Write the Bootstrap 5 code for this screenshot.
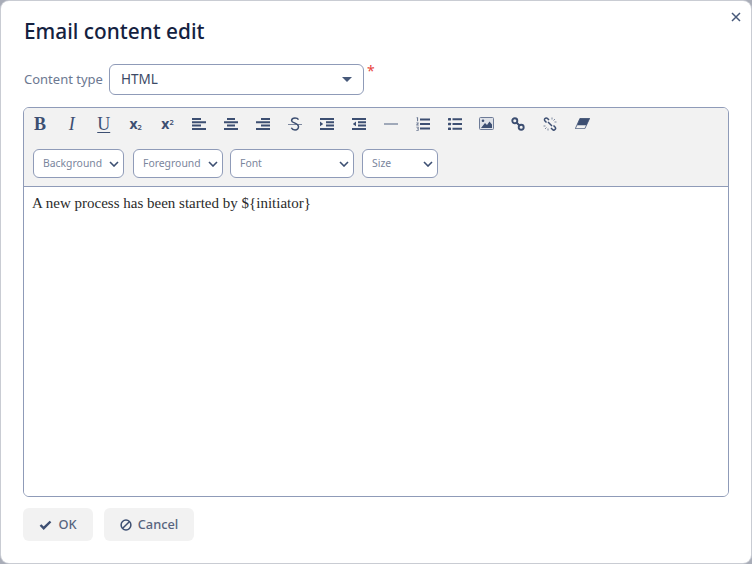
<!DOCTYPE html>
<html lang="en">
<head>
<meta charset="utf-8">
<title>Email content edit</title>
<link href="https://cdn.jsdelivr.net/npm/bootstrap@5.3.0/dist/css/bootstrap.min.css" rel="stylesheet">
<style>
html,body{height:100%;}
body{background:#a9adb8;font-family:"Noto Sans","Open Sans",sans-serif;overflow:hidden;}
.dlg{position:relative;width:750px;height:562px;margin:1px 0 0 1px;background:#fff;border-radius:8px;padding:0 22px;display:flex;flex-direction:column;box-shadow:0 0 0 1px #c9ccd3;}
.dlg-title{font-size:20.800px;font-weight:500;color:#14213f;line-height:28px;margin:16px 0 0 1px;}
.dlg-close{position:absolute;top:10px;right:9px;width:12px;height:12px;border:0;background:none;padding:0;line-height:0;color:#47597a;}
.type-row{margin:19px 0 0 1px;height:31px;}
.type-label{font-size:13px;color:#6c7891;width:85px;flex:none;}
.type-select{width:255px;height:31px;border:1px solid #8f9bb8;border-radius:6px;font-size:13.500px;color:#3c4a66;padding:0 11px;background:#fff;}
.req{color:#e8453c;font-size:14px;line-height:14px;margin:0 0 0 3px;align-self:flex-start;}
.tri{width:0;height:0;border-left:5px solid transparent;border-right:5px solid transparent;border-top:5px solid #47597a;}
.editor{margin-top:12px;height:390px;width:706px;border:1px solid #8f9bb8;border-radius:6px;overflow:hidden;display:flex;flex-direction:column;}
.tools{background:#f2f2f2;border-bottom:1px solid #8f9bb8;height:79px;flex:none;}
.tool-row{height:31px;}
.tool{width:31.900px;height:31px;display:flex;align-items:center;justify-content:center;color:#3d4f72;flex:none;font-family:"Liberation Serif",serif;font-size:18px;line-height:1;}
.tool svg{display:block;}
.tool b{font-weight:700;}
.tool u{text-underline-offset:2px;}
.tool .sc{font-family:"Noto Sans",sans-serif;font-size:14px;font-weight:700;}
.tool .sc sub,.tool .sc sup{font-size:7.500px;font-weight:600;}
.sel-row{margin:10px 0 0 9px;gap:9px;}
.mini{height:29px;border:1px solid #8f9bb8;border-radius:6px;background:#fff;font-size:10.400px;color:#7a859c;padding:0 4px 0 9px;}
.w1{width:91px}.w2{width:90px;margin-right:-2px}.w3{width:124px;margin-right:-1px}.w4{width:76px}
.doc{flex:1;background:#fff;padding:7px 8px;font-family:"Liberation Serif",serif;font-size:15px;line-height:18px;color:#2b2b2b;}
.acts{margin-top:11px;gap:11px;}
.act{height:33px;background:#f2f2f2;border:0;border-radius:6px;font-size:12.800px;font-weight:500;color:#57647e;padding:0;display:flex;align-items:center;justify-content:center;gap:6px;}
.act-ok{width:70px}.act-cancel{width:90px}
</style>
</head>
<body>
<div class="dlg">
  <h5 class="dlg-title">Email content edit</h5>
  <button class="dlg-close" type="button" aria-label="Close">
    <svg width="12" height="12" viewBox="0 0 12 12"><path d="M2 2l8 8M10 2l-8 8" stroke="currentColor" stroke-width="1.500" fill="none"/></svg>
  </button>
  <div class="type-row d-flex align-items-center">
    <span class="type-label">Content type</span>
    <div class="type-select d-flex align-items-center justify-content-between"><span>HTML</span><span class="tri"></span></div>
    <span class="req">*</span>
  </div>
  <div class="editor">
    <div class="tools">
      <div class="tool-row d-flex">
        <span class="tool"><b>B</b></span>
        <span class="tool"><i>I</i></span>
        <span class="tool"><u>U</u></span>
        <span class="tool"><span class="sc">x<sub>2</sub></span></span>
        <span class="tool"><span class="sc">x<sup>2</sup></span></span>
        <span class="tool"><svg width="14" height="12" viewBox="0 0 14 12" fill="currentColor"><path d="M0 0h9v2H0zM0 3.300h14v2H0zM0 6.600h9v2H0zM0 9.900h14v2H0z"/></svg></span>
        <span class="tool"><svg width="14" height="12" viewBox="0 0 14 12" fill="currentColor"><path d="M3 0h8v2H3zM0 3.300h14v2H0zM3 6.600h8v2H3zM0 9.900h14v2H0z"/></svg></span>
        <span class="tool"><svg width="14" height="12" viewBox="0 0 14 12" fill="currentColor"><path d="M5 0h9v2H5zM0 3.300h14v2H0zM5 6.600h9v2H5zM0 9.900h14v2H0z"/></svg></span>
        <span class="tool"><svg width="14" height="14" viewBox="0 0 14 14"><path d="M0 7.500h14" stroke="#7d889f" stroke-width="1"/><path d="M10.500 2.600C9.800 1.400 8.400 1 7 1 5 1 3.600 2 3.600 3.700 3.600 6 10.500 6 10.500 9.600 10.500 11.600 9 13 7 13 5.200 13 4 12.300 3.300 10.800" fill="none" stroke="currentColor" stroke-width="1.500"/></svg></span>
        <span class="tool"><svg width="14" height="12" viewBox="0 0 14 12" fill="currentColor"><path d="M0 0h14v2H0zM6 3.300h8v2H6zM6 6.600h8v2H6zM0 9.900h14v2H0zM0 3.500l3.200 2.400L0 8.300z"/></svg></span>
        <span class="tool"><svg width="14" height="12" viewBox="0 0 14 12" fill="currentColor"><path d="M0 0h14v2H0zM6 3.300h8v2H6zM6 6.600h8v2H6zM0 9.900h14v2H0zM4 3.500L.8 5.900 4 8.300z"/></svg></span>
        <span class="tool"><svg width="14" height="4" viewBox="0 0 14 4"><path d="M0 2h14" stroke="#8590a6" stroke-width="1.300"/></svg></span>
        <span class="tool"><svg width="14" height="14" viewBox="0 0 14 14" fill="currentColor"><path d="M4 1.500h10v2H4zM4 6h10v2H4zM4 10.500h10v2H4z"/><path d="M.6.300h1.500v4H1V1.300H.6zM.3 5.500h2.400v.9L1.400 7.600h1.300v.8H.3v-.8L1.600 6.300H.3zM.3 9.800h2.400v3.900H.3v-.8h1.400v-.8H1v-.7h.7v-.8H.3z" opacity=".75"/></svg></span>
        <span class="tool"><svg width="14" height="12" viewBox="0 0 14 12" fill="currentColor"><rect x="0" y="0" width="3" height="2.600" rx=".6"/><rect x="0" y="4.700" width="3" height="2.600" rx=".6"/><rect x="0" y="9.400" width="3" height="2.600" rx=".6"/><path d="M4.500.3H14v2H4.500zM4.500 5H14v2H4.500zM4.500 9.700H14v2H4.500z"/></svg></span>
        <span class="tool"><svg width="15" height="13" viewBox="0 0 15 13"><rect x=".5" y=".5" width="14" height="12" rx="1" fill="#dfe2e8" stroke="#6d7b97"/><path d="M2 11l4-5 2 2L10.500 4.500 13 7.500V11z" fill="currentColor"/><circle cx="4" cy="3.800" r="1.300" fill="currentColor"/></svg></span>
        <span class="tool"><svg width="14" height="14" viewBox="0 0 14 14" fill="none" stroke="currentColor" stroke-width="1.900"><circle cx="3.800" cy="3.800" r="2.500"/><circle cx="10.200" cy="10.200" r="2.500"/><path d="M5.500 5.500l3 3"/></svg></span>
        <span class="tool"><svg width="14" height="14" viewBox="0 0 14 14" fill="none" stroke="currentColor" stroke-width="1.500"><path d="M3.500 5.500L2 4a1.700 1.700 0 0 1 2.500-2.500L6 3M8 11l1.500 1.500A1.700 1.700 0 0 0 12 10l-1.500-1.500M5 5l4 4"/><path d="M9 .5v2M12 2l-1.500 1.500M13.500 5h-2M.5 9h2M2 12l1.500-1.500M5 13.500v-2" stroke-width="1" stroke="#7d889f"/></svg></span>
        <span class="tool"><svg width="15" height="11" viewBox="0 0 15 11"><path d="M5 .3h9.700L9.800 10.700H.3z" fill="#f2f2f2" stroke="#3d4f72" stroke-width=".8"/><path d="M5 .3h9.700L11.500 7.300H2z" fill="#3d4f72"/></svg></span>
      </div>
      <div class="sel-row d-flex">
        <div class="mini w1 d-flex align-items-center justify-content-between"><span>Background</span><svg width="10" height="6" viewBox="0 0 10 6"><path d="M1 1l4 4 4-4" fill="none" stroke="#3d4f72" stroke-width="1.600"/></svg></div>
        <div class="mini w2 d-flex align-items-center justify-content-between"><span>Foreground</span><svg width="10" height="6" viewBox="0 0 10 6"><path d="M1 1l4 4 4-4" fill="none" stroke="#3d4f72" stroke-width="1.600"/></svg></div>
        <div class="mini w3 d-flex align-items-center justify-content-between"><span>Font</span><svg width="10" height="6" viewBox="0 0 10 6"><path d="M1 1l4 4 4-4" fill="none" stroke="#3d4f72" stroke-width="1.600"/></svg></div>
        <div class="mini w4 d-flex align-items-center justify-content-between"><span>Size</span><svg width="10" height="6" viewBox="0 0 10 6"><path d="M1 1l4 4 4-4" fill="none" stroke="#3d4f72" stroke-width="1.600"/></svg></div>
      </div>
    </div>
    <div class="doc">A new process has been started by ${initiator}</div>
  </div>
  <div class="acts d-flex">
    <button class="act act-ok" type="button"><svg width="13" height="10" viewBox="0 0 13 10"><path d="M1.500 5l3.200 3.200L11.500 1.500" fill="none" stroke="#3d4f72" stroke-width="2.400"/></svg>OK</button>
    <button class="act act-cancel" type="button"><svg width="12" height="12" viewBox="0 0 12 12" fill="none" stroke="#3d4f72" stroke-width="1.500"><circle cx="6" cy="6" r="4.900"/><path d="M2.700 9.300l6.600-6.600"/></svg>Cancel</button>
  </div>
</div>
</body>
</html>
